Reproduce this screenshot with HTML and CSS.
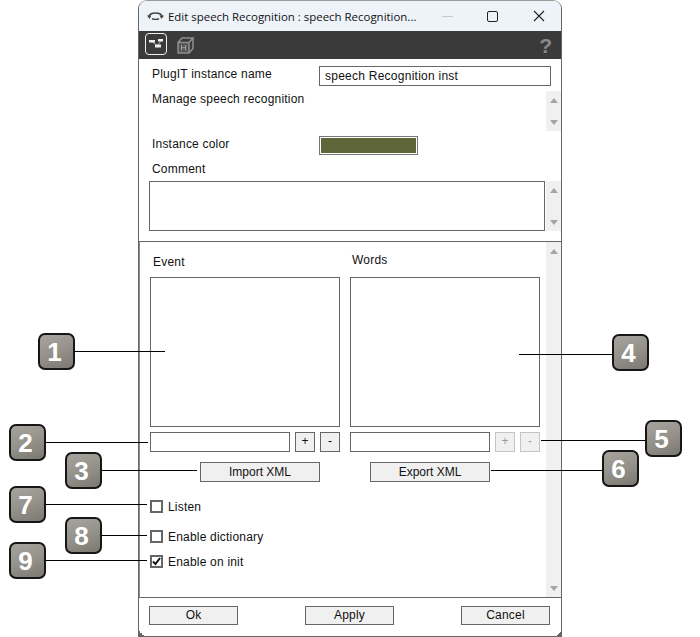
FILE: index.html
```html
<!DOCTYPE html>
<html lang="en">
<head>
<meta charset="utf-8">
<title>Edit speech Recognition</title>
<link rel="stylesheet" href="styles.css">
</head>
<body>
<div class="stage">
  <div class="window">
    <div class="titlebar">
      <svg class="app-icon" width="17" height="8" viewBox="0 0 17 8"><path d="M2 4C3 1.500 5.500 1 8.500 1S14 1.500 15 4" fill="none" stroke="#444" stroke-width="1.500"/><path d="M5 6.800C7 7.500 10 7.500 12 6.800" fill="none" stroke="#444" stroke-width="1.500"/><path d="M0 3.500h4.500L2.500 7zM12.500 3.500H17L14.500 7z" fill="#444"/></svg>
      <span class="title">Edit speech Recognition : speech Recognition...</span>
      <div class="controls">
        <svg class="ctl-min" width="11" height="11" viewBox="0 0 11 11"><path d="M0 5.500h11" stroke="#c4c8cc"/></svg>
        <svg class="ctl-max" width="11" height="11" viewBox="0 0 11 11"><rect x=".5" y=".5" width="10" height="10" rx="1.500" fill="none" stroke="#222"/></svg>
        <svg class="ctl-close" width="12" height="12" viewBox="0 0 12 12"><path d="M1 1l10 10M11 1L1 11" stroke="#222" stroke-width="1.100"/></svg>
      </div>
    </div>
    <div class="toolbar">
      <div class="tool-active">
        <svg width="14" height="9" viewBox="0 0 14 9"><path d="M3 2.500l5 4M11.500 2.500L9 6" stroke="#aaa" fill="none"/><rect x="0" y="1" width="6" height="2.500" fill="#eee"/><rect x="9" y="0" width="5" height="2.500" fill="#eee"/><rect x="6" y="5.500" width="6" height="3" fill="#eee"/></svg>
      </div>
      <svg class="tool-cube" width="17" height="17" viewBox="0 0 17 17"><path d="M1 5.500h11V16H1z" fill="#555"/><path d="M1 5.500h11V16H1zM1 5.500l4-4.500h11l-4 4.500M12 16l4-4.500V1" fill="none" stroke="#8f8f8f" stroke-width="1.500"/><path d="M4.500 8v5.500M8.500 8v5.500M4.500 10.700h4" stroke="#a0a0a0" fill="none"/></svg>
      <span class="tool-help">?</span>
    </div>
    <div class="form">
      <div class="row-name">
        <span class="label label-wide">PlugIT instance name</span>
        <div class="field-name">speech Recognition inst</div>
      </div>
      <div class="row-desc">
        <span class="label">Manage speech recognition</span>
        <div class="scrollbar"><i class="arrow-up"></i><i class="arrow-down"></i></div>
      </div>
      <div class="row-color">
        <span class="label label-wide">Instance color</span>
        <div class="swatch"></div>
      </div>
      <div class="label label-comment">Comment</div>
      <div class="row-comment">
        <div class="comment-box"></div>
        <div class="scrollbar"><i class="arrow-up"></i><i class="arrow-down"></i></div>
      </div>
    </div>
    <div class="lower">
      <div class="lower-main">
        <div class="columns">
          <div class="col">
            <div class="col-label col-label-event">Event</div>
            <div class="listbox"></div>
            <div class="entry-row">
              <div class="entry"></div>
              <div class="mini">+</div>
              <div class="mini">-</div>
            </div>
            <div class="btn btn-xml btn-import">Import XML</div>
          </div>
          <div class="col">
            <div class="col-label col-label-words">Words</div>
            <div class="listbox"></div>
            <div class="entry-row">
              <div class="entry"></div>
              <div class="mini mini-off">+</div>
              <div class="mini mini-off">-</div>
            </div>
            <div class="btn btn-xml btn-export">Export XML</div>
          </div>
        </div>
        <div class="checks">
          <div class="check check-listen"><span class="box"></span>Listen</div>
          <div class="check check-dict"><span class="box"></span>Enable dictionary</div>
          <div class="check check-init"><span class="box"><svg width="9" height="9" viewBox="0 0 9 9"><path d="M1 4.500l2.500 2.500 4.500-6" fill="none" stroke="#111" stroke-width="2"/></svg></span>Enable on init</div>
        </div>
      </div>
      <div class="scrollbar"><i class="arrow-up"></i><i class="arrow-down"></i></div>
    </div>
    <div class="footer">
      <div class="btn btn-foot">Ok</div>
      <div class="btn btn-foot">Apply</div>
      <div class="btn btn-foot">Cancel</div>
    </div>
  </div>

  <div class="callout c1"><span class="badge">1</span><span class="line"></span></div>
  <div class="callout c2"><span class="badge">2</span><span class="line"></span></div>
  <div class="callout c3"><span class="badge">3</span><span class="line"></span></div>
  <div class="callout callout-right c4"><span class="badge">4</span><span class="line"></span></div>
  <div class="callout callout-right c5"><span class="badge">5</span><span class="line"></span></div>
  <div class="callout callout-right c6"><span class="badge">6</span><span class="line"></span></div>
  <div class="callout c7"><span class="badge">7</span><span class="line"></span></div>
  <div class="callout c8"><span class="badge">8</span><span class="line"></span></div>
  <div class="callout c9"><span class="badge">9</span><span class="line"></span></div>
</div>
</body>
</html>
```

FILE: styles.css
```css
* { box-sizing: border-box; }
html, body { margin: 0; padding: 0; background: #fff; }
body { font-family: "Liberation Sans", Arial, sans-serif; font-size: 12px; color: #111; overflow: hidden; }

.stage { position: relative; width: 700px; height: 637px; overflow: hidden; }

.window {
  margin-left: 138px;
  width: 424px;
  height: 637px;
  display: flex;
  flex-direction: column;
  border: 1px solid #666;
  border-top-color: #9a9a9a;
  border-radius: 9px 9px 0 0;
  background: #fff;
  overflow: hidden;
}

.titlebar {
  height: 30px;
  flex: none;
  display: flex;
  align-items: center;
  padding-left: 8px;
  background: #eef3f9;
}
.app-icon { flex: none; }
.title {
  margin-left: 4px;
  font-family: "Open Sans", "Noto Sans", sans-serif;
  font-size: 11.450px;
  color: #111;
  white-space: nowrap;
}
.controls { margin-left: auto; display: flex; align-items: center; padding-right: 16px; }
.ctl-min { margin-right: 34px; }
.ctl-max { margin-right: 35px; }

.toolbar {
  height: 28px;
  flex: none;
  display: flex;
  align-items: center;
  padding-left: 6px;
  padding-right: 9px;
  background: #3a3a3a;
}
.tool-active {
  width: 22px;
  height: 22px;
  margin-bottom: 3px;
  border: 1px solid #f0f0f0;
  border-radius: 4px;
  display: flex;
  align-items: center;
  justify-content: center;
}
.tool-cube { margin-left: 10px; }
.tool-help {
  margin-left: auto;
  font-size: 21px;
  font-weight: bold;
  line-height: 21px;
  color: #8a8a8a;
}

.label { letter-spacing: .2px; white-space: nowrap; line-height: 14px; }

.form { height: 183px; flex: none; border-bottom: 1px solid #666; padding-top: 7px; }
.row-name { display: flex; height: 20px; padding-left: 13px; }
.row-name .label { margin-top: 1px; }
.label-wide { width: 167px; flex: none; }
.field-name {
  width: 232px;
  height: 20px;
  border: 1px solid #666;
  padding-left: 5px;
  line-height: 19px;
  letter-spacing: .25px;
}
.row-desc { display: flex; justify-content: space-between; height: 40px; margin-top: 5px; padding-left: 13px; }
.row-desc .label { margin-top: 1px; }
.row-color { display: flex; margin-top: 5px; height: 19px; padding-left: 13px; }
.row-color .label { margin-top: 1px; }
.swatch {
  width: 99px;
  height: 19px;
  background: #5f673a;
  border: 1px solid #777;
  box-shadow: inset 0 0 0 1px #fff;
}
.label-comment { margin: 7px 0 0 13px; height: 14px; }
.row-comment { display: flex; margin-top: 5px; padding-left: 10px; height: 50px; }
.comment-box { width: 396px; height: 50px; border: 1px solid #666; margin-right: 1px; }

.scrollbar {
  width: 15px;
  flex: none;
  background: #f0f0f0;
  display: flex;
  flex-direction: column;
  justify-content: space-between;
  align-items: center;
  padding: 7px 0 6px;
}
.arrow-up, .arrow-down { display: block; width: 0; height: 0; border-left: 4px solid transparent; border-right: 4px solid transparent; }
.arrow-up { border-bottom: 5px solid #a4a4a4; }
.arrow-down { border-top: 5px solid #a4a4a4; }

.lower { flex: 1; display: flex; min-height: 0; }
.lower-main { flex: 1; border-left: 1px solid #8a8a8a; padding-left: 10px; }

.columns { display: flex; gap: 10px; }
.col { width: 190px; display: flex; flex-direction: column; }
.col-label { height: 35px; letter-spacing: .2px; line-height: 14px; }
.col-label-event { padding: 13px 0 0 3px; }
.col-label-words { padding: 11px 0 0 2px; }
.listbox { height: 150px; border: 1px solid #666; }
.entry-row { display: flex; margin-top: 5px; height: 20px; }
.entry { width: 140px; border: 1px solid #666; }
.mini {
  width: 20px;
  margin-left: 5px;
  background: #f0f0f0;
  border: 1px solid #666;
  text-align: center;
  line-height: 17px;
  font-size: 12px;
}
.mini-off { border-color: #c4c4c4; color: #999; }

.btn {
  background: #f0f0f0;
  border: 1px solid #666;
  text-align: center;
}
.btn-xml { width: 120px; height: 20px; line-height: 18px; margin-top: 10px; }
.btn-import { margin-left: 50px; }
.btn-export { margin-left: 20px; }

.check { display: flex; align-items: center; height: 13px; letter-spacing: .2px; white-space: nowrap; }
.box {
  width: 13px;
  height: 13px;
  border: 2px solid #666;
  margin-right: 5px;
  display: flex;
  align-items: center;
  justify-content: center;
  background: #fff;
}
.check-listen { margin-top: 18px; }
.check-dict { margin-top: 17px; }
.check-init { margin-top: 12px; }

.footer {
  height: 39px;
  flex: none;
  border-top: 1px solid #666;
  display: flex;
  justify-content: space-between;
  padding: 8px 11px 0 10px;
  background:
    linear-gradient(135deg, transparent 50%, #666 50%) right bottom / 5px 5px no-repeat,
    linear-gradient(225deg, transparent 50%, #666 50%) left bottom / 5px 5px no-repeat,
    #fff;
}
.btn-foot { width: 89px; height: 19px; line-height: 17px; letter-spacing: .2px; }

.callout { position: absolute; display: flex; align-items: center; height: 37px; }
.callout-right { flex-direction: row-reverse; }
.callout-right .line { margin-top: 4px; }
.badge {
  width: 37px;
  height: 37px;
  flex: none;
  padding-right: 4px;
  border: 2px solid #161616;
  border-radius: 7px;
  background: linear-gradient(160deg, #a6a49c 0%, #94928a 50%, #7a7870 100%);
  color: #fff;
  font-size: 26px;
  font-weight: bold;
  text-align: center;
  line-height: 35px;
}
.line { display: block; height: 1px; background: #000; }

.c1 { left: 38px; top: 333px; } .c1 .line { width: 90px; }
.c2 { left: 9px; top: 424px; } .c2 .line { width: 102px; }
.c3 { left: 65px; top: 452px; } .c3 .line { width: 95px; }
.c4 { right: 51px; top: 334px; } .c4 .line { width: 93px; }
.c5 { right: 18px; top: 420px; } .c5 .line { width: 104px; }
.c6 { right: 61px; top: 450px; } .c6 .line { width: 111px; }
.c7 { left: 9px; top: 486px; } .c7 .line { width: 101px; }
.c8 { left: 65px; top: 517px; } .c8 .line { width: 45px; }
.c9 { left: 9px; top: 542px; } .c9 .line { width: 101px; }
```
